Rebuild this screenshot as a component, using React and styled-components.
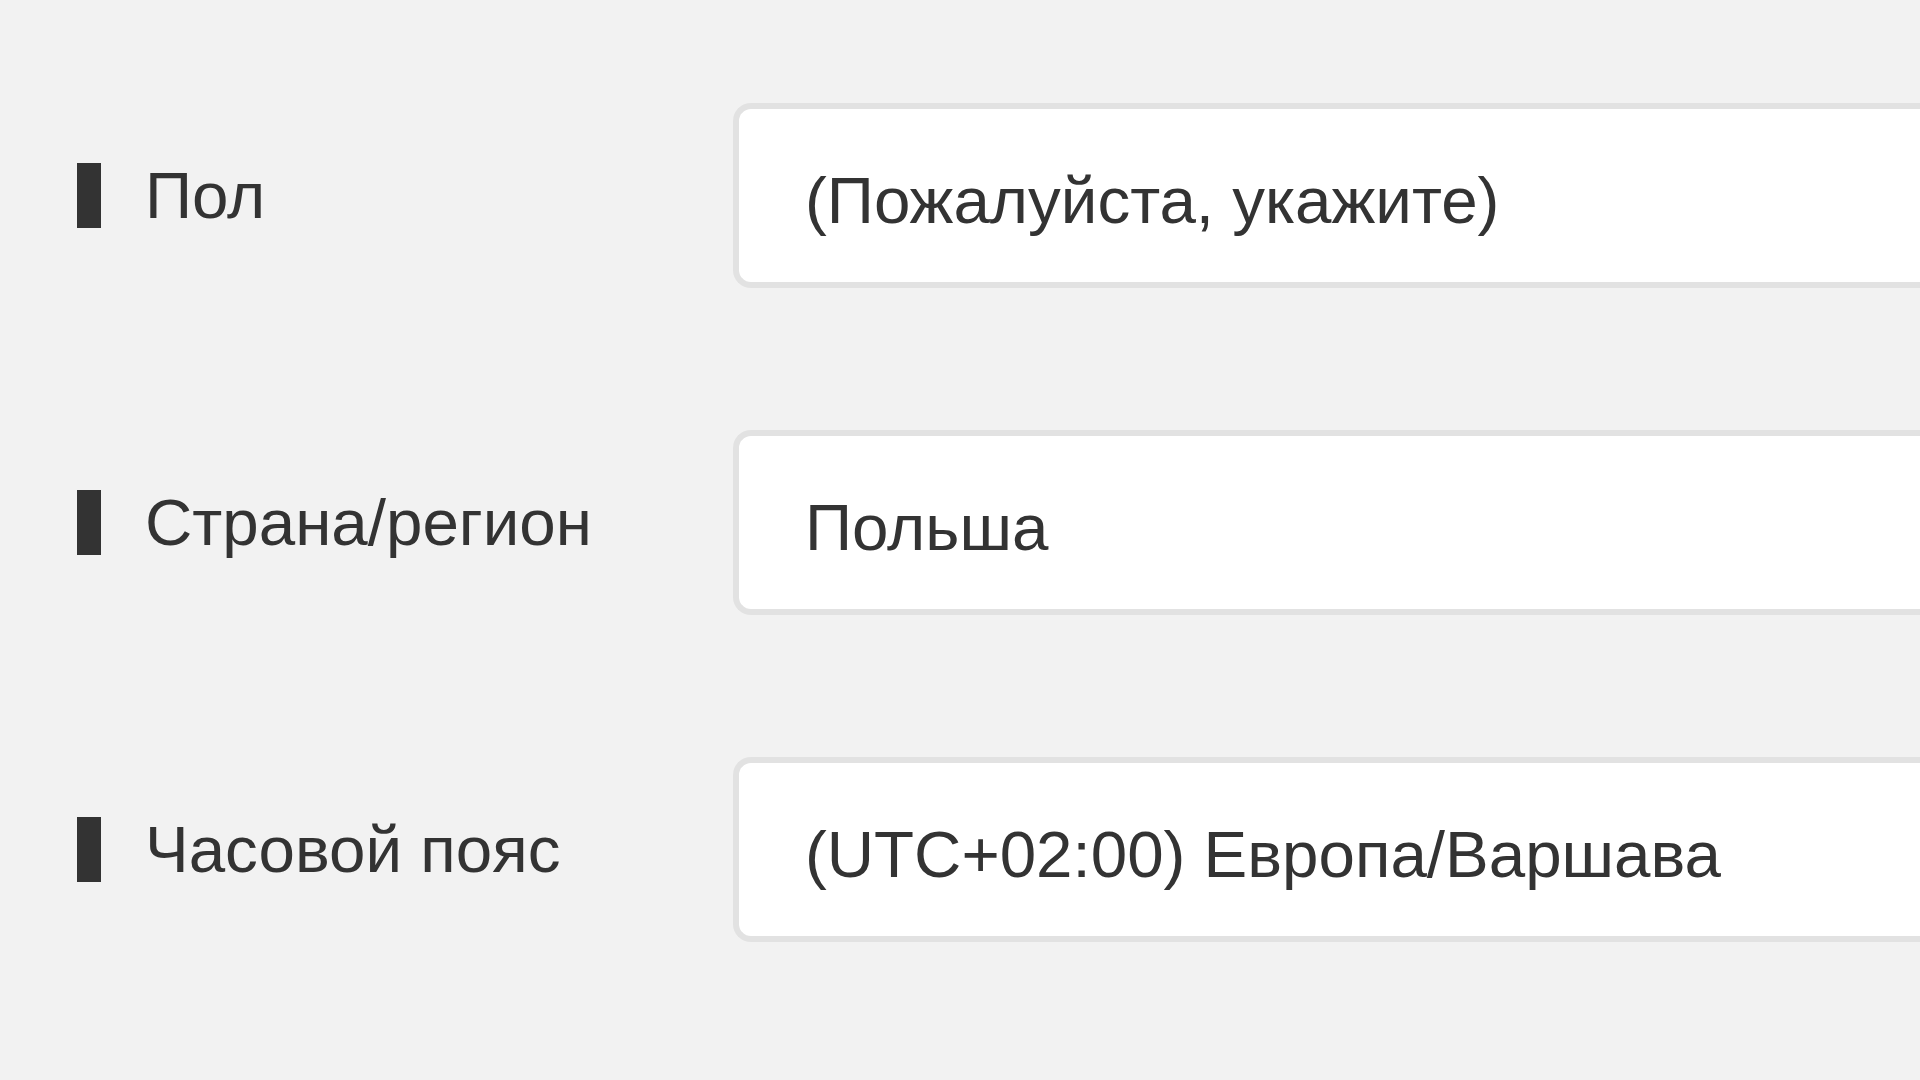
import React from 'react';
import styled, { createGlobalStyle } from 'styled-components';

const GlobalStyle = createGlobalStyle`
  html, body {
    margin: 0;
    padding: 0;
    background: #f2f2f2;
    overflow: hidden;
  }
  body {
    width: 1920px;
    height: 1080px;
    font-family: 'Liberation Sans', Arial, sans-serif;
    color: #333;
  }
`;

const Form = styled.div`
  box-sizing: border-box;
  width: 1920px;
  display: flex;
  flex-direction: column;
  gap: 142px;
  padding: 103px 0 0 77px;
`;

const Row = styled.div`
  display: flex;
  align-items: center;
  height: 185px;
`;

const Label = styled.div`
  display: flex;
  align-items: center;
  width: 656px;
  flex-shrink: 0;
  font-size: 65.5px;
  color: #333;
`;

const Marker = styled.span`
  width: 24px;
  height: 65px;
  background: #333;
  margin-right: 44px;
  flex-shrink: 0;
`;

const Field = styled.div`
  box-sizing: border-box;
  display: flex;
  align-items: center;
  flex: 1;
  min-width: 0;
  height: 185px;
  padding: 10px 0 0 66px;
  background: #fff;
  border: 6px solid #e2e2e2;
  border-right: none;
  border-radius: 18px 0 0 18px;
  font-size: 65.5px;
  color: #333;
  white-space: nowrap;
  overflow: hidden;
`;

const rows = [
  { label: 'Пол', value: '(Пожалуйста, укажите)' },
  { label: 'Страна/регион', value: 'Польша' },
  { label: 'Часовой пояс', value: '(UTC+02:00) Европа/Варшава' },
];

export default function App() {
  return (
    <>
      <GlobalStyle />
      <Form>
        {rows.map((r) => (
          <Row key={r.label}>
            <Label>
              <Marker />
              {r.label}
            </Label>
            <Field>{r.value}</Field>
          </Row>
        ))}
      </Form>
    </>
  );
}
